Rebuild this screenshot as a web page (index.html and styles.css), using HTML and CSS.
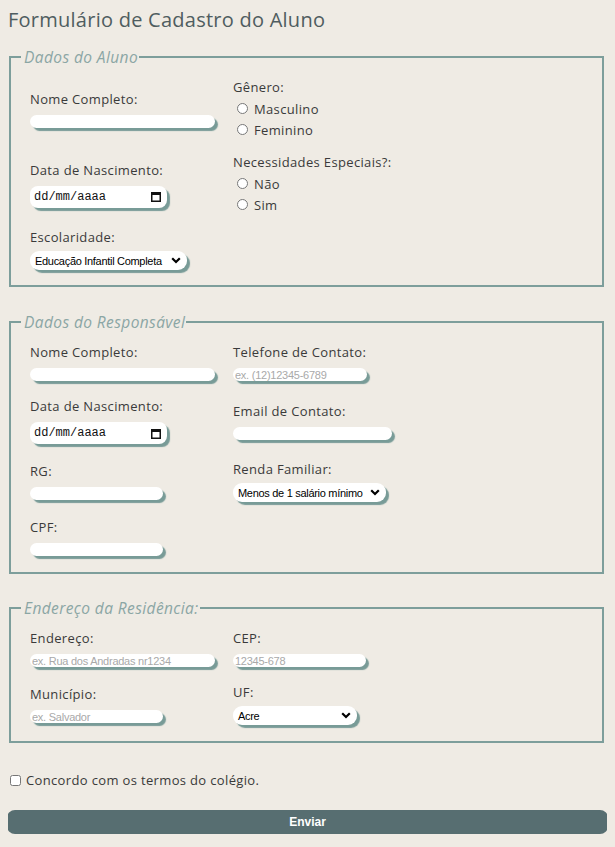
FILE: index.html
```html
<!DOCTYPE html>
<html lang="pt-BR">
<head>
<meta charset="utf-8">
<title>Formulário de Cadastro do Aluno</title>
<link rel="stylesheet" href="styles.css">
</head>
<body>
<h1 class="title">Formulário de Cadastro do Aluno</h1>
<form class="form">
  <fieldset class="group group-first">
    <legend class="legend">Dados do Aluno</legend>
    <div class="grid grid-tight">
      <div class="field">
        <label class="lbl">Nome Completo:</label>
        <input class="txt w185" type="text">
      </div>
      <div class="field">
        <span class="lbl lbl-radio">Gênero:</span>
        <label class="opt"><input class="radio" type="radio" name="g">Masculino</label>
        <label class="opt"><input class="radio" type="radio" name="g">Feminino</label>
      </div>
      <div class="field">
        <label class="lbl">Data de Nascimento:</label>
        <div class="date">
          <span class="date-text">dd/mm/aaaa</span>
          <svg class="cal" width="10" height="11" viewBox="0 0 10 11"><rect x="0.75" y="1.75" width="8.5" height="8.5" fill="none" stroke="#111" stroke-width="1.5"/><rect x="0" y="1" width="10" height="3" fill="#111"/></svg>
        </div>
      </div>
      <div class="field">
        <span class="lbl lbl-radio">Necessidades Especiais?:</span>
        <label class="opt"><input class="radio" type="radio" name="n">Não</label>
        <label class="opt"><input class="radio" type="radio" name="n">Sim</label>
      </div>
      <div class="field">
        <label class="lbl lbl-sel">Escolaridade:</label>
        <div class="sel w157">
          <span class="sel-text">Educação Infantil Completa</span>
          <svg class="chev" width="10" height="7" viewBox="0 0 10 7"><path d="M1.2 1.2 L5 5 L8.8 1.2" fill="none" stroke="#000" stroke-width="2.2"/></svg>
        </div>
      </div>
    </div>
  </fieldset>

  <fieldset class="group">
    <legend class="legend">Dados do Responsável</legend>
    <div class="grid">
      <div class="field">
        <label class="lbl">Nome Completo:</label>
        <input class="txt w185" type="text">
      </div>
      <div class="field">
        <label class="lbl">Telefone de Contato:</label>
        <input class="txt w134" type="text" placeholder="ex. (12)12345-6789">
      </div>
      <div class="field">
        <label class="lbl">Data de Nascimento:</label>
        <div class="date">
          <span class="date-text">dd/mm/aaaa</span>
          <svg class="cal" width="10" height="11" viewBox="0 0 10 11"><rect x="0.75" y="1.75" width="8.5" height="8.5" fill="none" stroke="#111" stroke-width="1.5"/><rect x="0" y="1" width="10" height="3" fill="#111"/></svg>
        </div>
      </div>
      <div class="field">
        <label class="lbl">Email de Contato:</label>
        <input class="txt w159" type="text">
      </div>
      <div class="field">
        <label class="lbl">RG:</label>
        <input class="txt w133" type="text">
      </div>
      <div class="field">
        <label class="lbl lbl-sel">Renda Familiar:</label>
        <div class="sel w153">
          <span class="sel-text">Menos de 1 salário mínimo</span>
          <svg class="chev" width="10" height="7" viewBox="0 0 10 7"><path d="M1.2 1.2 L5 5 L8.8 1.2" fill="none" stroke="#000" stroke-width="2.2"/></svg>
        </div>
      </div>
      <div class="field">
        <label class="lbl">CPF:</label>
        <input class="txt w133" type="text">
      </div>
    </div>
  </fieldset>

  <fieldset class="group">
    <legend class="legend">Endereço da Residência:</legend>
    <div class="grid">
      <div class="field">
        <label class="lbl">Endereço:</label>
        <input class="txt w185" type="text" placeholder="ex. Rua dos Andradas nr1234">
      </div>
      <div class="field">
        <label class="lbl">CEP:</label>
        <input class="txt w133" type="text" placeholder="12345-678">
      </div>
      <div class="field">
        <label class="lbl">Município:</label>
        <input class="txt w133" type="text" placeholder="ex. Salvador">
      </div>
      <div class="field">
        <label class="lbl lbl-sel">UF:</label>
        <div class="sel w124">
          <span class="sel-text">Acre</span>
          <svg class="chev" width="10" height="7" viewBox="0 0 10 7"><path d="M1.2 1.2 L5 5 L8.8 1.2" fill="none" stroke="#000" stroke-width="2.2"/></svg>
        </div>
      </div>
    </div>
  </fieldset>

  <label class="agree"><input class="check" type="checkbox">Concordo com os termos do colégio.</label>

  <button class="submit" type="button">Enviar</button>
</form>
</body>
</html>
```

FILE: styles.css
```css
html, body {
  background: #efebe4;
}
body {
  margin: 8px;
  font-family: "Open Sans", "DejaVu Sans", sans-serif;
  color: #3a3a3a;
}
.title {
  margin: 0;
  font-size: 20px;
  line-height: 24px;
  font-weight: 400;
  color: #4f5d60;
  letter-spacing: 0.25px;
}
.form {
  margin: 0;
}
.group {
  margin: 16px 3px 0 1px;
  padding: 13px 10px 16px 19px;
  border: 2px solid #7d9e9b;
  min-width: 0;
}
.group-first {
  padding-bottom: 15px;
}
.group + .group {
  margin-top: 26px;
}
.group + .group + .group {
  margin-top: 25px;
}
.legend {
  margin-left: -9px;
  padding: 0 1px 0 3px;
  font-size: 15.5px;
  line-height: 18px;
  font-style: italic;
  color: #8ba6a4;
  letter-spacing: 0.4px;
}
.grid {
  display: grid;
  grid-template-columns: 203px 1fr;
  align-items: center;
  row-gap: 17px;
}
.grid-tight {
  row-gap: 14px;
}
.field {
  display: flex;
  flex-direction: column;
  align-items: flex-start;
}
.lbl {
  display: block;
  font-size: 13px;
  line-height: 16px;
  letter-spacing: 0.35px;
  margin-bottom: 8px;
}
.lbl-radio {
  margin-bottom: 3px;
}
.lbl-sel {
  margin-bottom: 6px;
}
.txt {
  display: block;
  box-sizing: border-box;
  height: 13px;
  padding: 0 2px;
  border: none;
  border-radius: 7px;
  background: #fff;
  box-shadow: 3px 3px 1px #789b97;
  font-family: "Liberation Sans", Arial, sans-serif;
  font-size: 11px;
  letter-spacing: -0.25px;
  outline: none;
}
.txt::placeholder {
  color: #a9a9a9;
}
.w185 { width: 185px; }
.w159 { width: 159px; }
.w134 { width: 134px; }
.w133 { width: 133px; }
.w157 { width: 157px; }
.w153 { width: 153px; }
.w124 { width: 124px; }
.opt {
  display: flex;
  align-items: center;
  height: 21px;
  font-size: 13px;
  letter-spacing: 0.35px;
}
.radio {
  width: 11px;
  height: 11px;
  margin: 0 6px 0 4px;
}
.date {
  box-sizing: border-box;
  width: 137px;
  height: 22px;
  padding: 0 6px 0 4px;
  display: flex;
  align-items: center;
  justify-content: space-between;
  background: #fff;
  border-radius: 8px;
  box-shadow: 3px 3px 1px #789b97;
}
.date-text {
  font-family: "Liberation Mono", "DejaVu Sans Mono", monospace;
  font-size: 12px;
  color: #111;
}
.cal {
  display: block;
}
.sel {
  box-sizing: border-box;
  height: 19px;
  padding: 0 6px 0 5px;
  display: flex;
  align-items: center;
  justify-content: space-between;
  background: #fff;
  border-radius: 9px;
  box-shadow: 3px 3px 1px #789b97;
}
.sel-text {
  font-family: "Liberation Sans", Arial, sans-serif;
  font-size: 11px;
  letter-spacing: -0.3px;
  color: #000;
  white-space: nowrap;
}
.chev {
  display: block;
  flex: none;
}
.agree {
  display: flex;
  align-items: center;
  margin-top: 29px;
  height: 16px;
  font-size: 13px;
  letter-spacing: 0.35px;
}
.check {
  width: 11px;
  height: 11px;
  margin: 0 5px 0 2px;
}
.submit {
  display: block;
  width: calc(100% + 2px);
  margin: 22px 0 0 -1px;
  height: 24px;
  border: none;
  border-radius: 8px;
  background: #576e71;
  color: #fff;
  font-family: "Liberation Sans", Arial, sans-serif;
  font-weight: bold;
  font-size: 12px;
}
```
